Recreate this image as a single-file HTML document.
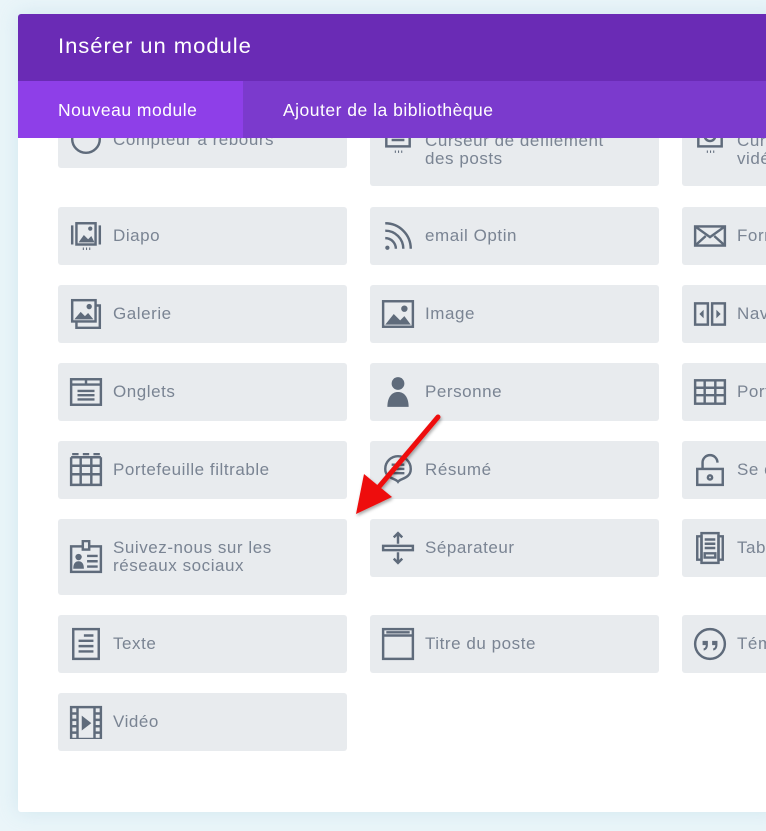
<!DOCTYPE html>
<html><head><meta charset="utf-8"><style>
*{margin:0;padding:0;box-sizing:border-box}
body{width:766px;height:831px;background:#eaf5f9;position:relative;overflow:hidden;font-family:"Liberation Sans",sans-serif}
.modal{position:absolute;left:18px;top:14px;width:760px;height:798px;background:#fff;border-radius:3px;overflow:hidden;box-shadow:0 0 20px rgba(150,200,220,.3)}
.hdr{position:absolute;left:0;top:0;right:0;height:67px;background:#6a2bb5;color:#fff;font-size:20px;padding:21px 0 0 40px;letter-spacing:.9px;transform-origin:0 0}
.hdr b{font-weight:normal;display:inline-block;transform:scaleX(1.05);transform-origin:0 0;font-size:21px}
.tabs{position:absolute;left:0;top:67px;right:0;height:57px;background:#7b3acd;color:#fff;font-size:17.5px;letter-spacing:.5px}
.tab{position:absolute;top:0;height:57px;line-height:58px}
.t1{left:0;width:225px;background:#8e3fe8;padding-left:40px}
.t2{left:265px}
.c{position:absolute;background:#e8ebee;border-radius:3px;height:58px;width:289px;color:#7a8493;font-size:17px;letter-spacing:.55px}
.c span{position:absolute;left:55px;top:50%;transform:translateY(-50%);line-height:18px;white-space:nowrap}
.c svg{position:absolute;left:11px;top:50%;margin-top:-17px;width:34px;height:34px;fill:none;stroke:#5f6b7b;stroke-width:2.3}
.f{fill:#5f6b7b;stroke:none}
</style></head><body>
<div class="modal">
<div class="c" style="left:40px;top:96px"><svg viewBox="0 0 32 32"><circle cx="16" cy="16" r="13"/><path d="M12 10h8"/></svg><span style="top:30px">Compteur à rebours</span></div>
<div class="c" style="left:352px;top:96px;height:76px"><svg viewBox="0 0 32 32" style="top:30px"><rect x="5" y="4" width="22" height="18"/><path d="M10 12h12M10 16h12"/><path d="M13 27h1M16 27h1M19 27h1"/></svg><span style="top:40px">Curseur de défilement<br>des posts</span></div>
<div class="c" style="left:664px;top:96px;height:76px"><svg viewBox="0 0 32 32" style="top:30px"><rect x="5" y="4" width="22" height="18"/><circle cx="16" cy="12" r="5"/><path d="M13 27h1M16 27h1M19 27h1"/></svg><span style="top:40px">Curseur vidéo<br>vidéo</span></div>

<div class="c" style="left:40px;top:193px"><svg viewBox="0 0 32 32"><path d="M3 6v18M29 6v18"/><rect x="7" y="4" width="18" height="20"/><path class="f" d="M9 22l5-7 4 4 3-3 3 6z"/><circle class="f" cx="20" cy="9" r="2"/><path d="M13 28h1M16 28h1M19 28h1"/></svg><span>Diapo</span></div>
<div class="c" style="left:352px;top:193px"><svg viewBox="0 0 32 32"><circle class="f" cx="6" cy="27" r="2"/><path d="M4 18a10 10 0 0 1 10 10M4 11a17 17 0 0 1 17 17M4 4a24 24 0 0 1 24 24"/></svg><span>email Optin</span></div>
<div class="c" style="left:664px;top:193px"><svg viewBox="0 0 32 32"><rect x="2" y="7" width="28" height="18"/><path d="M2 7l14 10 14-10M2 25l10-9M30 25l-10-9"/></svg><span>Formulaire</span></div>

<div class="c" style="left:40px;top:271px"><svg viewBox="0 0 32 32"><rect x="3" y="3" width="22" height="20"/><path d="M7 23v6h22V8h-4"/><path class="f" d="M5 21l6-7 4 4 3-3 5 6z"/><circle class="f" cx="19" cy="9" r="2.5"/></svg><span>Galerie</span></div>
<div class="c" style="left:352px;top:271px"><svg viewBox="0 0 32 32"><rect x="2" y="4" width="28" height="24"/><path class="f" d="M4 26l8-10 6 6 4-4 6 8z"/><circle class="f" cx="22" cy="11" r="3"/></svg><span>Image</span></div>
<div class="c" style="left:664px;top:271px"><svg viewBox="0 0 32 32"><rect x="2" y="6" width="12" height="20"/><rect x="18" y="6" width="12" height="20"/><path class="f" d="M10 12l-4 4 4 4zM22 12l4 4-4 4z"/></svg><span>Navigation</span></div>

<div class="c" style="left:40px;top:349px"><svg viewBox="0 0 32 32"><rect x="2" y="4" width="28" height="24"/><path d="M2 9h28M16 4v5M8 15h16M8 19h16M8 23h16"/></svg><span>Onglets</span></div>
<div class="c" style="left:352px;top:349px"><svg viewBox="0 0 32 32"><circle class="f" cx="16" cy="8" r="6"/><path class="f" d="M6 30c0-9 4-14 10-14s10 5 10 14z"/></svg><span>Personne</span></div>
<div class="c" style="left:664px;top:349px"><svg viewBox="0 0 32 32"><rect x="2" y="5" width="28" height="22"/><path d="M2 12h28M2 19h28M11 5v22M21 5v22"/></svg><span>Portefeuille</span></div>

<div class="c" style="left:40px;top:427px"><svg viewBox="0 0 32 32"><path d="M2 4h28M2 4v26h28V4M2 12h28M2 20h28M11 4v26M21 4v26"/><path d="M3 1h6M13 1h6M23 1h6"/></svg><span>Portefeuille filtrable</span></div>
<div class="c" style="left:352px;top:427px"><svg viewBox="0 0 32 32"><path d="M16 27c-2-3-12-3-12-12a12 12 0 0 1 24 0c0 9-10 9-12 12z"/><path d="M10 11h12M10 15h12M10 19h12"/></svg><span>Résumé</span></div>
<div class="c" style="left:664px;top:427px"><svg viewBox="0 0 32 32"><rect x="4" y="15" width="24" height="15"/><path d="M9 15V9a7 7 0 0 1 14 0"/><circle cx="16" cy="23" r="2"/></svg><span>Se connecter</span></div>

<div class="c" style="left:40px;top:505px;height:76px"><svg viewBox="0 0 32 32"><rect x="2" y="6" width="28" height="24"/><rect x="13" y="1" width="6" height="8" fill="#e8ebee"/><circle class="f" cx="9" cy="16" r="3"/><path class="f" d="M4 27c0-5 2-7 5-7s5 2 5 7z"/><path d="M17 15h10M17 20h10M17 25h10"/></svg><span>Suivez-nous sur les<br>réseaux sociaux</span></div>
<div class="c" style="left:352px;top:505px"><svg viewBox="0 0 32 32"><rect x="2" y="14" width="28" height="4"/><path d="M16 2v10M16 20v10M12 6l4-4 4 4M12 26l4 4 4-4"/></svg><span>Séparateur</span></div>
<div class="c" style="left:664px;top:505px"><svg viewBox="0 0 32 32"><rect x="8" y="2" width="16" height="28"/><path d="M4 5h4v22H4zM24 5h4v22h-4zM11 8h10M11 12h10M11 16h10M11 21h10v4H11z"/></svg><span>Tableau</span></div>

<div class="c" style="left:40px;top:601px"><svg viewBox="0 0 32 32"><rect x="4" y="2" width="24" height="28"/><path d="M14 8h9M9 13h14M9 18h14M9 23h14"/></svg><span>Texte</span></div>
<div class="c" style="left:352px;top:601px"><svg viewBox="0 0 32 32"><rect x="2" y="2" width="28" height="28"/><path d="M2 8h28M5 5h22"/></svg><span>Titre du poste</span></div>
<div class="c" style="left:664px;top:601px"><svg viewBox="0 0 32 32"><circle cx="16" cy="16" r="14"/><path class="f" d="M9 13h5v4c0 3-2 5-4 5v-2c1 0 2-1 2-3H9zM18 13h5v4c0 3-2 5-4 5v-2c1 0 2-1 2-3h-3z"/></svg><span>Témoignage</span></div>

<div class="c" style="left:40px;top:679px"><svg viewBox="0 0 32 32"><rect x="2" y="2" width="28" height="30"/><path d="M8 2v30M24 2v30M2 8h6M2 14h6M2 20h6M2 26h6M24 8h6M24 14h6M24 20h6M24 26h6"/><path class="f" d="M12 10l9 7-9 7z"/></svg><span>Vidéo</span></div>

<div class="hdr"><b>Insérer un module</b></div>
<div class="tabs"><div class="tab t1">Nouveau module</div><div class="tab t2">Ajouter de la bibliothèque</div></div>
</div>
<svg style="position:absolute;left:0;top:0" width="766" height="831"><defs><filter id="s"><feDropShadow dx="1" dy="2" stdDeviation="1.5" flood-opacity=".35"/></filter></defs>
<g filter="url(#s)"><path d="M438 417L378 488" stroke="#ee1111" stroke-width="5" stroke-linecap="round"/><path d="M356 514L364 474 392 497z" fill="#ee1111"/></g></svg>
</body></html>
